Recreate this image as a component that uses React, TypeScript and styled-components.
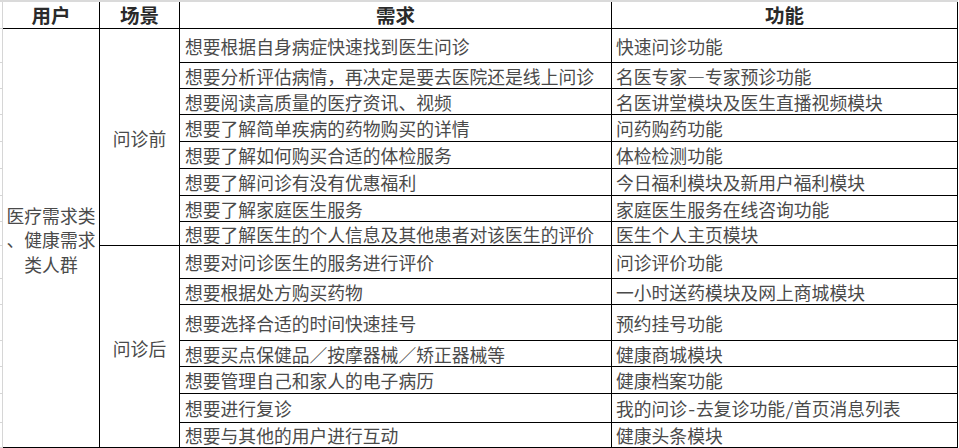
import React from 'react';
import styled, { createGlobalStyle } from 'styled-components';

const GlobalStyle = createGlobalStyle`
  html, body {
    margin: 0;
    padding: 0;
    background: #ffffff;
  }
  body {
    font-family: "Noto Sans CJK SC", "Noto Sans", sans-serif;
  }
`;

const GRID = '#d6d6d6';
const LINE = '#000000';

// row heights in px, measured off the sheet (header first)
const rowHeights = [27, 34, 26, 26, 27, 27, 27, 26, 24, 33, 26, 36, 26, 27, 29, 25];

const Full = styled.span`
  font-feature-settings: "fwid";
`;

const Half = styled.span`
  font-feature-settings: "hwid";
`;

type Item = { need: React.ReactNode; feature: React.ReactNode; id: string };

const before: Item[] = [
  { id: 'b1', need: '想要根据自身病症快速找到医生问诊', feature: '快速问诊功能' },
  {
    id: 'b2',
    need: '想要分析评估病情，再决定是要去医院还是线上问诊',
    feature: (
      <>
        名医专家<Full>—</Full>专家预诊功能
      </>
    ),
  },
  { id: 'b3', need: '想要阅读高质量的医疗资讯、视频', feature: '名医讲堂模块及医生直播视频模块' },
  { id: 'b4', need: '想要了解简单疾病的药物购买的详情', feature: '问药购药功能' },
  { id: 'b5', need: '想要了解如何购买合适的体检服务', feature: '体检检测功能' },
  { id: 'b6', need: '想要了解问诊有没有优惠福利', feature: '今日福利模块及新用户福利模块' },
  { id: 'b7', need: '想要了解家庭医生服务', feature: '家庭医生服务在线咨询功能' },
  { id: 'b8', need: '想要了解医生的个人信息及其他患者对该医生的评价', feature: '医生个人主页模块' },
];

const after: Item[] = [
  { id: 'a1', need: '想要对问诊医生的服务进行评价', feature: '问诊评价功能' },
  { id: 'a2', need: '想要根据处方购买药物', feature: '一小时送药模块及网上商城模块' },
  { id: 'a3', need: '想要选择合适的时间快速挂号', feature: '预约挂号功能' },
  { id: 'a4', need: '想要买点保健品／按摩器械／矫正器械等', feature: '健康商城模块' },
  { id: 'a5', need: '想要管理自己和家人的电子病历', feature: '健康档案功能' },
  {
    id: 'a6',
    need: '想要进行复诊',
    feature: (
      <>
        我的问诊<Half>-</Half>去复诊功能<Half>/</Half>首页消息列表
      </>
    ),
  },
  { id: 'a7', need: '想要与其他的用户进行互动', feature: '健康头条模块' },
];

const Sheet = styled.div`
  display: grid;
  grid-template-columns: 3px 97px 80px 432px 346px;
  grid-template-rows: ${rowHeights.map((h) => `${h}px`).join(' ')};
  border-top: 2px solid #dadada;
  width: 958px;
`;

const Gutter = styled.div`
  grid-column: 1;
  box-sizing: border-box;
  border-right: 1px solid ${GRID};
  border-bottom: 1px solid ${GRID};
`;

const HeadCell = styled.div<{ $col: number }>`
  grid-column: ${(p) => p.$col};
  box-sizing: border-box;
  border-right: 1px solid ${LINE};
  border-bottom: 1px solid ${LINE};
  display: flex;
  align-items: center;
  justify-content: center;
  font-size: 19.5px;
  font-weight: 700;
  color: #2a2a2a;
  line-height: 1;
`;

const GroupCell = styled.div<{ $col: number; $span: number }>`
  grid-column: ${(p) => p.$col};
  grid-row: span ${(p) => p.$span};
  box-sizing: border-box;
  border-right: 1px solid ${LINE};
  border-bottom: 1px solid ${LINE};
  display: flex;
  align-items: center;
  justify-content: center;
  text-align: center;
  line-break: anywhere;
  padding: 3px 1px 0;
  font-size: 17.8px;
  line-height: 24.5px;
  color: #4a4a4a;
`;

const TextCell = styled.div<{ $col: number; $pad: number }>`
  grid-column: ${(p) => p.$col};
  box-sizing: border-box;
  border-right: 1px solid ${LINE};
  border-bottom: 1px solid ${LINE};
  display: flex;
  align-items: center;
  padding: 2px 0 0 ${(p) => p.$pad}px;
  font-size: 17.8px;
  line-height: 1;
  color: #4a4a4a;
  white-space: nowrap;
`;

const Row = ({ item }: { item: Item }) => (
  <>
    <TextCell $col={4} $pad={5}>
      <span>{item.need}</span>
    </TextCell>
    <TextCell $col={5} $pad={4}>
      <span>{item.feature}</span>
    </TextCell>
  </>
);

const App = () => {
  return (
    <>
      <GlobalStyle />
      <Sheet>
        <Gutter />
        <HeadCell $col={2}>用户</HeadCell>
        <HeadCell $col={3}>场景</HeadCell>
        <HeadCell $col={4}>需求</HeadCell>
        <HeadCell $col={5}>功能</HeadCell>

        {before.map((r, i) => (
          <React.Fragment key={r.id}>
            <Gutter />
            {i === 0 && (
              <>
                <GroupCell $col={2} $span={before.length + after.length}>
                  医疗需求类、健康需求类人群
                </GroupCell>
                <GroupCell $col={3} $span={before.length}>
                  问诊前
                </GroupCell>
              </>
            )}
            <Row item={r} />
          </React.Fragment>
        ))}

        {after.map((r, i) => (
          <React.Fragment key={r.id}>
            <Gutter />
            {i === 0 && (
              <GroupCell $col={3} $span={after.length}>
                问诊后
              </GroupCell>
            )}
            <Row item={r} />
          </React.Fragment>
        ))}
      </Sheet>
    </>
  );
};

export default App;
